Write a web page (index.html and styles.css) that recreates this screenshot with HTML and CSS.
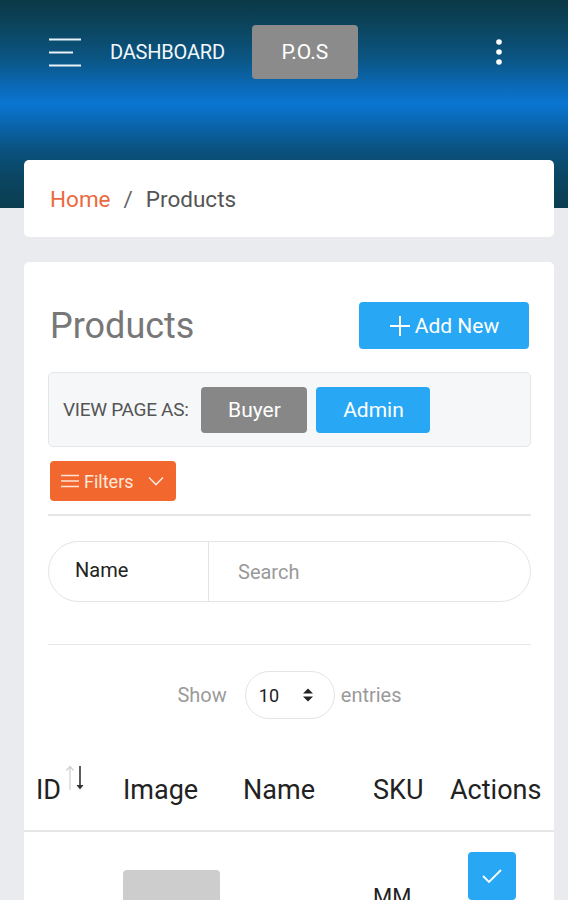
FILE: index.html
```html
<!DOCTYPE html>
<html lang="en">
<head>
<meta charset="utf-8">
<title>Products</title>
<link rel="stylesheet" href="styles.css">
</head>
<body>
<header class="topbar">
  <nav class="nav">
    <button class="burger" aria-label="Menu">
      <svg width="34" height="30" viewBox="0 0 34 30"><path d="M1 2.5H33M1 15.5H25M1 28.5H33" stroke="#e8f2f8" stroke-width="2" fill="none"/></svg>
    </button>
    <span class="nav-title">DASHBOARD</span>
    <button class="pos">P.O.S</button>
    <span class="nav-spacer"></span>
    <button class="kebab" aria-label="More">
      <svg width="8" height="28" viewBox="0 0 8 28"><circle cx="4" cy="4" r="2.8" fill="#fff"/><circle cx="4" cy="14" r="2.8" fill="#fff"/><circle cx="4" cy="24" r="2.8" fill="#fff"/></svg>
    </button>
  </nav>
</header>

<main class="content">
  <section class="card crumbs">
    <a class="crumb-home" href="#">Home</a>
    <span class="crumb-sep">/</span>
    <span class="crumb-current">Products</span>
  </section>

  <section class="card panel">
    <div class="panel-head">
      <h1 class="panel-title">Products</h1>
      <button class="btn btn-blue add-new">
        <svg width="22" height="22" viewBox="0 0 22 22"><path d="M11 1V21M1 11H21" stroke="#fff" stroke-width="2"/></svg>
        <span>Add New</span>
      </button>
    </div>

    <div class="view-as">
      <span class="view-label">VIEW PAGE AS:</span>
      <button class="btn btn-gray role">Buyer</button>
      <button class="btn btn-blue role">Admin</button>
    </div>

    <button class="btn btn-orange filters">
      <svg width="18" height="14" viewBox="0 0 18 14"><path d="M0 1.5H18M0 7H18M0 12.5H18" stroke="#fde3d6" stroke-width="1.6"/></svg>
      <span>Filters</span>
      <svg class="chev" width="16" height="10" viewBox="0 0 16 10"><path d="M1 1.5L8 8.5L15 1.5" stroke="#fde3d6" stroke-width="1.6" fill="none"/></svg>
    </button>

    <hr class="rule">

    <div class="search">
      <span class="search-field">Name</span>
      <span class="search-input">Search</span>
    </div>

    <hr class="rule rule-2">

    <div class="entries">
      <span>Show</span>
      <span class="select">10
        <svg width="12" height="16" viewBox="0 0 12 16"><path d="M1 6.5L6 1.5L11 6.5Z M1 9.5L6 14.5L11 9.5Z" fill="#222"/></svg>
      </span>
      <span>entries</span>
    </div>

    <table class="table">
      <thead>
        <tr>
          <th class="c-id">ID<span class="sort"><svg width="22" height="28" viewBox="0 0 22 28"><path d="M5 26V3M1.5 6.5L5 2.5L8.5 6.5" stroke="#cfcfcf" stroke-width="1.2" fill="none"/><path d="M15 2V24" stroke="#333" stroke-width="1.6"/><path d="M11.5 21L15 25.5L18.5 21Z" fill="#333"/></svg></span></th>
          <th class="c-img">Image</th>
          <th class="c-name">Name</th>
          <th class="c-sku">SKU</th>
          <th class="c-act">Actions</th>
        </tr>
      </thead>
      <tbody>
        <tr>
          <td class="c-id"></td>
          <td class="c-img"><div class="thumb"></div></td>
          <td class="c-name"></td>
          <td class="c-sku"><span class="sku-text">MM</span></td>
          <td class="c-act"><button class="btn btn-blue check"><svg width="22" height="16" viewBox="0 0 22 16"><path d="M2 8L8 14L20 2" stroke="#fff" stroke-width="1.8" fill="none"/></svg></button></td>
        </tr>
      </tbody>
    </table>
  </section>
</main>
</body>
</html>
```
FILE: styles.css
```css
* { box-sizing: border-box; }
html, body { margin: 0; padding: 0; }
body {
  font-family: Roboto, "Liberation Sans", Arial, sans-serif;
  background: #e9ebee;
  width: 568px;
  height: 900px;
  overflow: hidden;
  position: relative;
}
button { font-family: inherit; border: 0; cursor: pointer; padding: 0; background: none; }

.topbar {
  height: 208px;
  background: linear-gradient(180deg, #0a3846 0%, #0b445c 12%, #0b5583 28%, #0a6ab8 42%, #0a76d2 50%, #0a65ad 60%, #0a527f 72%, #0a4663 85%, #0b3d4f 100%);
}
.nav {
  display: flex;
  align-items: center;
  height: 103px;
  padding: 0 65px 0 48px;
}
.burger { display: flex; width: 34px; height: 30px; }
.nav-title {
  margin-left: 28px;
  color: #f2f8fb;
  font-size: 20px;
  letter-spacing: -0.2px;
}
.pos {
  margin-left: 27px;
  width: 106px;
  height: 54px;
  background: #8b8b8b;
  color: #fff;
  font-size: 21px;
  border-radius: 4px;
}
.nav-spacer { flex: 1; }
.kebab { display: flex; }

.content {
  margin-top: -48px;
  padding: 0 14px 0 24px;
  display: flex;
  flex-direction: column;
  gap: 25px;
}
.card {
  background: #fff;
  border-radius: 5px;
}
.crumbs {
  height: 77px;
  display: flex;
  align-items: center;
  padding-left: 26px;
  font-size: 22.5px;
}
.crumb-home { color: #ec6a3f; text-decoration: none; }
.crumb-sep { color: #666; margin: 0 13px; }
.crumb-current { color: #555; }

.panel {
  padding: 40px 23px 0 24px;
  height: 700px;
}
.panel-head {
  display: flex;
  align-items: center;
  justify-content: space-between;
  padding-left: 2px;
}
.panel-title {
  margin: 0;
  font-size: 36px;
  font-weight: 400;
  color: #777;
}
.btn { color: #fff; border-radius: 4px; }
.btn-blue { background: #28a8f4; }
.btn-gray { background: #878787; }
.btn-orange { background: #f2672d; }
.add-new {
  width: 170px;
  height: 47px;
  margin-right: 2px;
  display: flex;
  align-items: center;
  justify-content: center;
  gap: 4px;
  font-size: 21px;
}
.view-as {
  margin-top: 23px;
  height: 75px;
  background: #f6f7f9;
  border: 1px solid #e4e6e8;
  border-radius: 5px;
  display: flex;
  align-items: center;
  padding-left: 14px;
  gap: 9px;
}
.view-label { font-size: 19px; color: #555; margin-right: 4px; letter-spacing: -0.3px; }
.role { height: 46px; font-size: 21px; }
.view-as .btn-gray { width: 106px; }
.view-as .btn-blue { width: 114px; }

.filters {
  margin-top: 14px;
  margin-left: 2px;
  width: 126px;
  height: 40px;
  display: flex;
  align-items: center;
  padding-left: 11px;
  gap: 5px;
  font-size: 18px;
  color: #fde9df;
}
.filters .chev { margin-left: 9px; }

.rule {
  margin: 13px 0 0;
  border: 0;
  border-top: 2px solid #e6e6e6;
}
.search {
  margin-top: 25px;
  height: 61px;
  border: 1.5px solid #e4e4e4;
  border-radius: 31px;
  display: flex;
  align-items: stretch;
  font-size: 20px;
}
.search-field {
  width: 160px;
  display: flex;
  align-items: center;
  padding-left: 26px;
  color: #222;
  border-right: 1.5px solid #e4e4e4;
  padding-bottom: 4px;
}
.search-input {
  display: flex;
  align-items: center;
  padding-left: 29px;
  color: #999;
}
.rule-2 { margin-top: 42px; border-top-width: 1.5px; }

.entries {
  margin-top: 26px;
  display: flex;
  align-items: center;
  justify-content: center;
  font-size: 20px;
  color: #9a9a9a;
}
.select {
  margin: 0 6px 0 18px;
  width: 90px;
  height: 48px;
  border: 1.5px solid #e4e4e4;
  border-radius: 24px;
  display: flex;
  align-items: center;
  justify-content: space-between;
  padding: 0 20px 0 13px;
  color: #222;
  font-size: 18px;
}

.table {
  margin: 30px -23px 0 -24px;
  width: calc(100% + 47px);
  border-collapse: collapse;
}
.table th {
  font-weight: 400;
  font-size: 27px;
  color: #222;
  text-align: left;
  height: 82px;
  padding: 0;
  border-bottom: 2px solid #e6e6e6;
}
.table td { padding: 0; height: 80px; vertical-align: top; font-size: 22px; color: #222; }
.c-id { width: 99px; padding-left: 12px !important; }
.c-img { width: 120px; }
.c-name { width: 130px; }
.c-sku { width: 77px; }
.sort { display: inline-block; vertical-align: top; margin-left: 4px; margin-top: -10px; }
.thumb { width: 97px; height: 60px; margin-top: 38px; background: #cdcdcd; border-radius: 4px; }
.sku-text { display: block; margin-top: 52px; }
.check { width: 48px; height: 48px; margin-top: 20px; margin-left: 18px; display: flex; align-items: center; justify-content: center; }
```
